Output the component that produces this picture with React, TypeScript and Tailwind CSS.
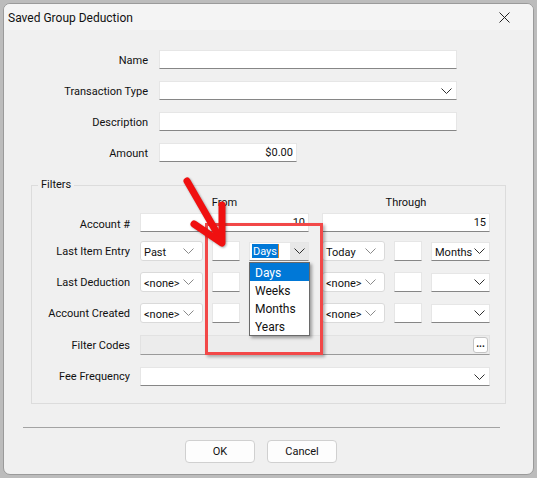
import React from "react";

const font = { fontFamily: '"Segoe UI", Roboto, "Liberation Sans", sans-serif' };

const Chevron = ({ light = false }: { light?: boolean }) => (
  <svg width="11" height="6" viewBox="0 0 11 6" className="shrink-0">
    <polyline
      points="0.5,0.5 5.5,5.5 10.5,0.5"
      fill="none"
      stroke={light ? "#8a8a8a" : "#303030"}
      strokeWidth="1"
    />
  </svg>
);

// plain text box: light edges, dark bottom line
const TextBox = ({ w, value = "", right = false }: { w: string; value?: string; right?: boolean }) => (
  <div
    className={`${w} h-[19px] bg-white border border-[#e6e6e6] border-b-[#868686] flex items-center px-[3px] pt-[2px] ${right ? "justify-end" : ""}`}
  >
    {value}
  </div>
);

// editable style combo (dark bottom line)
const EditCombo = ({ w, value = "" }: { w: string; value?: string }) => (
  <div className={`${w} h-[19px] bg-white border border-[#e6e6e6] border-b-[#868686] flex items-center justify-between pl-[3px] pr-[4px]`}>
    <span className="h-[15px] leading-[15px] mt-[2px]">{value}</span>
    <Chevron />
  </div>
);

// drop-list combo (rounded, all-light border)
const ListCombo = ({ value }: { value: string }) => (
  <div className="w-[63px] h-[20px] bg-white border border-[#dadada] rounded-[3px] flex items-center justify-between pl-[3px] pr-[8px]">
    <span className="h-[15px] leading-[15px] mt-[2px]">{value}</span>
    <Chevron light />
  </div>
);

const SmallBox = () => <div className="w-[28px] h-[20px] bg-white border border-[#e6e6e6] border-b-[#868686]" />;

// label for the main fields
const Label = ({ text }: { text: string }) => (
  <div className="text-right h-[19px] leading-[19px] pt-[1px]">{text}</div>
);

const FilterRow = ({ label, mt, children, lp = "pt-0" }: { label: string; mt: string; children: React.ReactNode; lp?: string }) => (
  <div className={`flex items-center ${mt}`}>
    <div className={`w-[98px] text-right whitespace-nowrap h-[19px] leading-[19px] ${lp}`}>{label}</div>
    <div className="ml-[10px] flex items-center">{children}</div>
  </div>
);

const PeriodRow = ({ label, mt, a, c }: { label: string; mt: string; a: string; c: string }) => (
  <FilterRow label={label} mt={mt}>
    <div className="flex items-center gap-[9px] w-[169px]">
      <ListCombo value={a} />
      <SmallBox />
      <EditCombo w="w-[60px]" />
    </div>
    <div className="flex items-center gap-[9px] ml-[13px]">
      <ListCombo value={c} />
      <SmallBox />
      <EditCombo w="w-[59px]" />
    </div>
  </FilterRow>
);

export default function App() {
  return (
    <div className="w-[537px] h-[478px] bg-[#bcbcbc] pt-[3px] pl-[3px] text-[11px] text-[#111]" style={font}>
      <div className="relative w-[531px] h-[472px] bg-[#f0f0f0] border border-[#9a9a9a] rounded-[7px] overflow-hidden">
        {/* title bar */}
        <div className="h-[26px] bg-[#f4f4f4] flex items-center justify-between pl-[4px] pr-[23px]">
          <span className="text-[12px] h-[18px] leading-[18px] mt-[1px]">Saved Group Deduction</span>
          <svg width="11" height="11" viewBox="0 0 11 11">
            <path d="M0.5 0.5 L10.5 10.5 M10.5 0.5 L0.5 10.5" stroke="#222" strokeWidth="1" />
          </svg>
        </div>

        {/* main fields */}
        <div className="pt-[20px] grid grid-cols-[144px_298px] gap-x-[11px] gap-y-[12px] items-center">
          <Label text="Name" />
          <TextBox w="w-[298px]" />
          <Label text="Transaction Type" />
          <EditCombo w="w-[298px]" />
          <Label text="Description" />
          <TextBox w="w-[298px]" />
          <Label text="Amount" />
          <TextBox w="w-[138px]" value="$0.00" right />
        </div>

        {/* filters group */}
        <fieldset className="ml-[27px] mt-[15px] w-[475px] border border-[#dcdcdc] pb-[17px]">
          <legend className="ml-[6px] px-[3px] leading-[16px]">Filters</legend>
          <div className="flex ml-[108px] h-[17px] leading-[17px] pt-[1px]">
            <div className="w-[169px] text-center">From</div>
            <div className="w-[168px] ml-[13px] text-center">Through</div>
          </div>
          <FilterRow label="Account #" mt="mt-[3px]" lp="pt-[2px]">
            <TextBox w="w-[169px]" value="10" right />
            <div className="ml-[13px]">
              <TextBox w="w-[168px]" value="15" right />
            </div>
          </FilterRow>
          <FilterRow label="Last Item Entry" mt="mt-[9px]">
            <div className="flex items-center gap-[9px] w-[169px]">
              <ListCombo value="Past" />
              <SmallBox />
              <div className="w-[60px] h-[19px] bg-white border border-[#e6e6e6] border-b-[#868686] flex items-center justify-between pl-[2px]">
                <span className="flex items-center">
                  <span className="bg-[#0078d7] text-white px-[1px] h-[14px] leading-[15px]">Days</span>
                  <span className="w-[1px] h-[14px] bg-[#e08a2c]" />
                </span>
                <span className="h-full w-[18px] bg-[#e8e8e8] flex items-center justify-center">
                  <Chevron />
                </span>
              </div>
            </div>
            <div className="flex items-center gap-[9px] ml-[13px]">
              <ListCombo value="Today" />
              <SmallBox />
              <EditCombo w="w-[59px]" value="Months" />
            </div>
          </FilterRow>
          <PeriodRow label="Last Deduction" mt="mt-[11px]" a="<none>" c="<none>" />
          <PeriodRow label="Account Created" mt="mt-[11px]" a="<none>" c="<none>" />
          <FilterRow label="Filter Codes" mt="mt-[12px]">
            <div className="w-[350px] h-[20px] bg-[#ececec] border border-[#e2e2e2] border-b-[#9a9a9a] flex items-center justify-end pr-[1px]">
              <div className="w-[15px] h-[16px] bg-white border border-[#c4c4c4] rounded-[3px] flex items-center justify-center text-[10px] font-bold leading-none pb-[3px]">
                ...
              </div>
            </div>
          </FilterRow>
          <FilterRow label="Fee Frequency" mt="mt-[12px]">
            <EditCombo w="w-[350px]" />
          </FilterRow>
        </fieldset>

        {/* separator + buttons */}
        <div className="ml-[19px] mt-[23px] w-[477px] h-px bg-[#a3a3a3]" />
        <div className="flex gap-[12px] ml-[181px] mt-[12px]">
          <button className="w-[70px] h-[23px] bg-[#fdfdfd] border border-[#d0d0d0] rounded-[4px] pt-[2px]">OK</button>
          <button className="w-[70px] h-[23px] bg-[#fdfdfd] border border-[#d0d0d0] rounded-[4px] pt-[2px]">Cancel</button>
        </div>

        {/* open list of the Days combo */}
        <div className="absolute left-[245px] top-[258px] w-[61px] bg-white border border-[#6a6a6a] shadow-[2px_2px_3px_rgba(0,0,0,0.35)] text-[12px]">
          <div className="bg-[#0078d7] text-white h-[18px] leading-[20px] pl-[5px]">Days</div>
          <div className="h-[18px] leading-[20px] pl-[5px]">Weeks</div>
          <div className="h-[18px] leading-[20px] pl-[5px]">Months</div>
          <div className="h-[18px] leading-[20px] pl-[5px]">Years</div>
        </div>

        {/* callout box */}
        <div className="absolute left-[201px] top-[219px] w-[118px] h-[132px] border-[3px] border-[#f24848] shadow-[2px_2px_3px_rgba(0,0,0,0.3)]" />

        {/* callout arrow */}
        <svg className="absolute left-[167px] top-[162px]" width="60" height="85" viewBox="0 0 60 85">
          <g stroke="#f01010" strokeWidth="7" strokeLinecap="round" strokeLinejoin="round" fill="none" style={{ filter: "drop-shadow(1px 1px 1px rgba(0,0,0,0.35))" }}>
            <line x1="16" y1="15" x2="50" y2="74" />
            <polyline points="23,58 51,77 51,39" />
          </g>
        </svg>
      </div>
    </div>
  );
}
